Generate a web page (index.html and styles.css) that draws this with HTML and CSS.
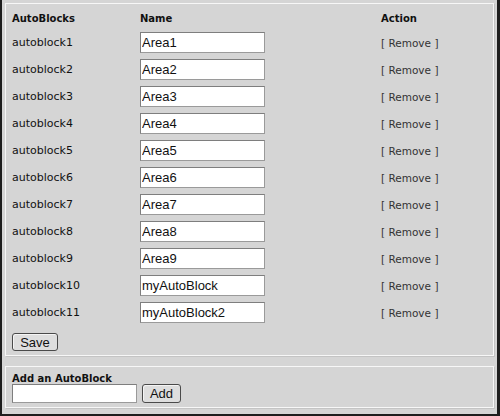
FILE: index.html
```html
<!DOCTYPE html>
<html>
<head>
<meta charset="utf-8">
<link rel="stylesheet" href="styles.css">
</head>
<body>
<div class="frame">
  <div class="panel main">
    <div class="grid">
      <div class="hd">AutoBlocks</div><div class="hd">Name</div><div class="hd">Action</div>
      <div class="lbl">autoblock1</div><div><input class="txt" value="Area1"></div><div class="act">[ Remove ]</div>
      <div class="lbl">autoblock2</div><div><input class="txt" value="Area2"></div><div class="act">[ Remove ]</div>
      <div class="lbl">autoblock3</div><div><input class="txt" value="Area3"></div><div class="act">[ Remove ]</div>
      <div class="lbl">autoblock4</div><div><input class="txt" value="Area4"></div><div class="act">[ Remove ]</div>
      <div class="lbl">autoblock5</div><div><input class="txt" value="Area5"></div><div class="act">[ Remove ]</div>
      <div class="lbl">autoblock6</div><div><input class="txt" value="Area6"></div><div class="act">[ Remove ]</div>
      <div class="lbl">autoblock7</div><div><input class="txt" value="Area7"></div><div class="act">[ Remove ]</div>
      <div class="lbl">autoblock8</div><div><input class="txt" value="Area8"></div><div class="act">[ Remove ]</div>
      <div class="lbl">autoblock9</div><div><input class="txt" value="Area9"></div><div class="act">[ Remove ]</div>
      <div class="lbl">autoblock10</div><div><input class="txt" value="myAutoBlock"></div><div class="act">[ Remove ]</div>
      <div class="lbl">autoblock11</div><div><input class="txt" value="myAutoBlock2"></div><div class="act">[ Remove ]</div>
    </div>
    <button class="btn save">Save</button>
  </div>
  <div class="panel add">
    <div class="hd addhd">Add an AutoBlock</div>
    <div class="addrow">
      <input class="txt addtxt" value="">
      <button class="btn addbtn">Add</button>
    </div>
  </div>
</div>
</body>
</html>
```

FILE: styles.css
```css
html, body {
  margin: 0;
  padding: 0;
  background: #d5d5d5;
}
.frame {
  width: 500px;
  height: 416px;
  box-sizing: border-box;
  background: #d5d5d5;
  border-left: 2px solid #1e1e1e;
  border-right: 3px solid #1e1e1e;
  border-bottom: 2px solid #1e1e1e;
  padding: 3px 3px 0 3px;
  font-family: "DejaVu Sans", Verdana, sans-serif;
  color: #111;
}
.panel {
  border: 1px solid #f7f7f7;
  box-shadow: 1px 1px 0 #c4c4c4;
}
.main {
  padding: 5px 6px 5px 6px;
  height: 353px;
  box-sizing: border-box;
}
.grid {
  display: grid;
  grid-template-columns: 128px 241px 1fr;
  grid-template-rows: 20px repeat(11, 27px);
  align-items: center;
}
.hd {
  font-weight: bold;
  font-size: 10px;
  line-height: 12px;
  color: #111;
}
.lbl {
  font-size: 11px;
  color: #111;
}
.act {
  font-size: 10.5px;
  color: #333;
}
.txt {
  display: block;
  width: 125px;
  height: 21px;
  box-sizing: border-box;
  margin: 0;
  padding: 0 1px;
  border: 1px solid #9a9a9a;
  border-top-color: #7e7e7e;
  border-left-color: #7e7e7e;
  background: #fff;
  font-family: "Liberation Sans", Arial, sans-serif;
  font-size: 13px;
  color: #111;
  outline: none;
}
.btn {
  display: block;
  margin: 0;
  padding: 0 6px;
  height: 18px;
  box-sizing: border-box;
  border: 1px solid #4a4a4a;
  border-radius: 3px;
  background: #dedede;
  box-shadow: inset 1px 1px 0 #f4f4f4;
  font-family: "Liberation Sans", Arial, sans-serif;
  font-size: 13px;
  line-height: 15px;
  color: #111;
}
.save {
  margin-top: 7px;
  width: 46px;
}
.add {
  margin-top: 10px;
  padding: 7px 6px 4px 6px;
}
.addhd {
  line-height: 10px;
}
.addrow {
  display: flex;
  gap: 5px;
}
.addtxt {
  height: 19px;
}
.addbtn {
  width: 39px;
  height: 19px;
}
```
